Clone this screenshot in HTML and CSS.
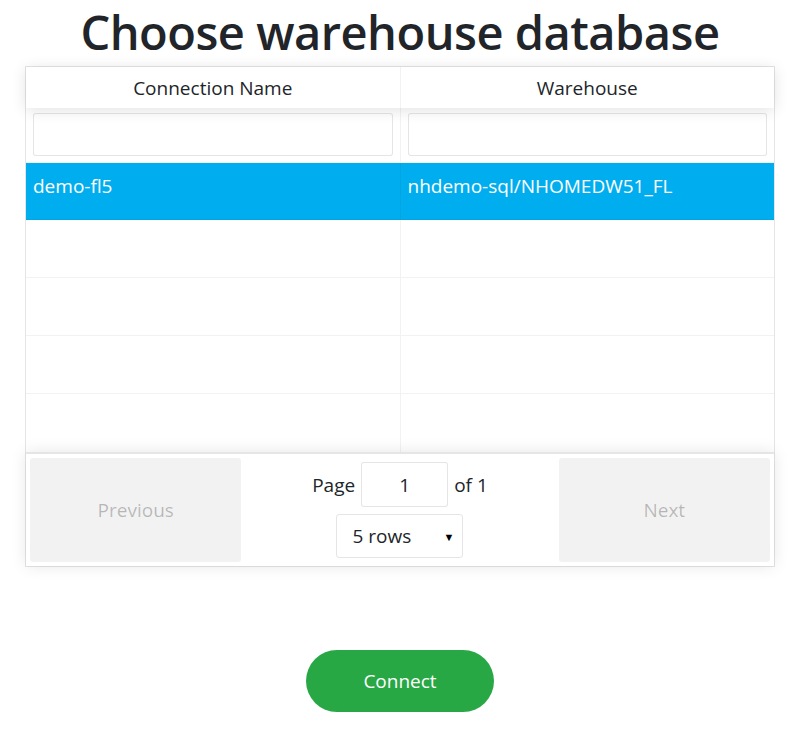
FILE: index.html
```html
<!DOCTYPE html>
<html>
<head>
<meta charset="utf-8">
<link rel="stylesheet" href="styles.css">
</head>
<body>
<div class="page">
  <h1 class="title">Choose warehouse database</h1>
  <div class="rt">
    <div class="rt-head">
      <div class="th">Connection Name</div>
      <div class="th">Warehouse</div>
    </div>
    <div class="rt-filters">
      <div class="tf"><input class="filter" type="text"></div>
      <div class="tf"><input class="filter" type="text"></div>
    </div>
    <div class="rt-body">
      <div class="tr selected"><div class="td">demo-fl5</div><div class="td">nhdemo-sql/NHOMEDW51_FL</div></div>
      <div class="tr"><div class="td"></div><div class="td"></div></div>
      <div class="tr"><div class="td"></div><div class="td"></div></div>
      <div class="tr"><div class="td"></div><div class="td"></div></div>
      <div class="tr last"><div class="td"></div><div class="td"></div></div>
    </div>
    <div class="pagination">
      <div class="pg-side"><button class="pg-btn" disabled>Previous</button></div>
      <div class="pg-center">
        <div class="pg-info">Page <input class="pg-input" type="text" value="1"> of 1</div>
        <div class="pg-select">5 rows <span class="caret">▼</span></div>
      </div>
      <div class="pg-side"><button class="pg-btn" disabled>Next</button></div>
    </div>
  </div>
  <div class="actions"><button class="connect">Connect</button></div>
</div>
</body>
</html>
```

FILE: styles.css
```css
* { box-sizing: border-box; }
body {
  margin: 0;
  font-family: "Open Sans", "Noto Sans", sans-serif;
  color: #212529;
  background: #fff;
}
.page {
  width: 750px;
  margin-left: 25px;
}
.title {
  margin: 0;
  height: 66px;
  font-size: 47px;
  font-weight: 600;
  line-height: 64px;
  text-align: center;
  letter-spacing: -0.5px;
  white-space: nowrap;
}
.rt {
  border: 1px solid rgba(0,0,0,0.1);
  font-size: 19px;
}
.rt-head {
  display: flex;
  height: 41px;
  box-shadow: 0 2px 15px 0 rgba(0,0,0,0.12);
  position: relative;
  z-index: 1;
}
.th, .tf, .td {
  flex: 1 1 0;
  border-right: 1px solid rgba(0,0,0,0.05);
}
.th:last-child, .tf:last-child, .td:last-child { border-right: 0; }
.th {
  text-align: center;
  line-height: 43px;
}
.rt-filters {
  display: flex;
  height: 55px;
  border-bottom: 1px solid rgba(0,0,0,0.05);
}
.tf { padding: 5px 7px 6px; }
.filter {
  width: 100%;
  height: 43px;
  border: 1px solid rgba(0,0,0,0.1);
  border-radius: 3px;
  background: #fff;
  outline: none;
}
.tr {
  display: flex;
  height: 58px;
  border-bottom: 1px solid rgba(0,0,0,0.05);
}
.tr.last { border-bottom: 0; }
.tr.selected {
  background: #00aeef;
  color: #fff;
  height: 57px;
}
.td {
  padding: 0 7px;
  line-height: 46px;
}
.pagination {
  display: flex;
  padding: 4px;
  border-top: 2px solid rgba(0,0,0,0.1);
  box-shadow: 0 0 15px 0 rgba(0,0,0,0.1);
  height: 114px;
}
.pg-side { flex: 1 1 0; }
.pg-btn {
  width: 100%;
  height: 100%;
  border: 0;
  border-radius: 3px;
  background: rgba(0,0,0,0.05);
  color: rgba(0,0,0,0.25);
  font-family: inherit;
  font-size: 19px;
}
.pg-center {
  flex: 1.5 1 0;
  display: flex;
  flex-direction: column;
  align-items: center;
  justify-content: center;
  gap: 7px;
}
.pg-info {
  display: flex;
  align-items: center;
  gap: 6px;
}
.pg-input {
  width: 87px;
  height: 45px;
  border: 1px solid rgba(0,0,0,0.1);
  border-radius: 3px;
  text-align: center;
  font-family: inherit;
  font-size: 19px;
  color: #212529;
  outline: none;
}
.pg-select {
  width: 127px;
  height: 44px;
  border: 1px solid rgba(0,0,0,0.1);
  border-radius: 3px;
  display: flex;
  align-items: center;
  justify-content: space-between;
  padding: 0 8px 0 15px;
}
.caret { font-size: 11px; color: #000; }
.actions {
  display: flex;
  justify-content: center;
  padding-top: 83px;
}
.connect {
  width: 188px;
  height: 62px;
  border: 0;
  border-radius: 31px;
  background: #28a745;
  color: #fff;
  font-family: inherit;
  font-size: 19px;
}
```
